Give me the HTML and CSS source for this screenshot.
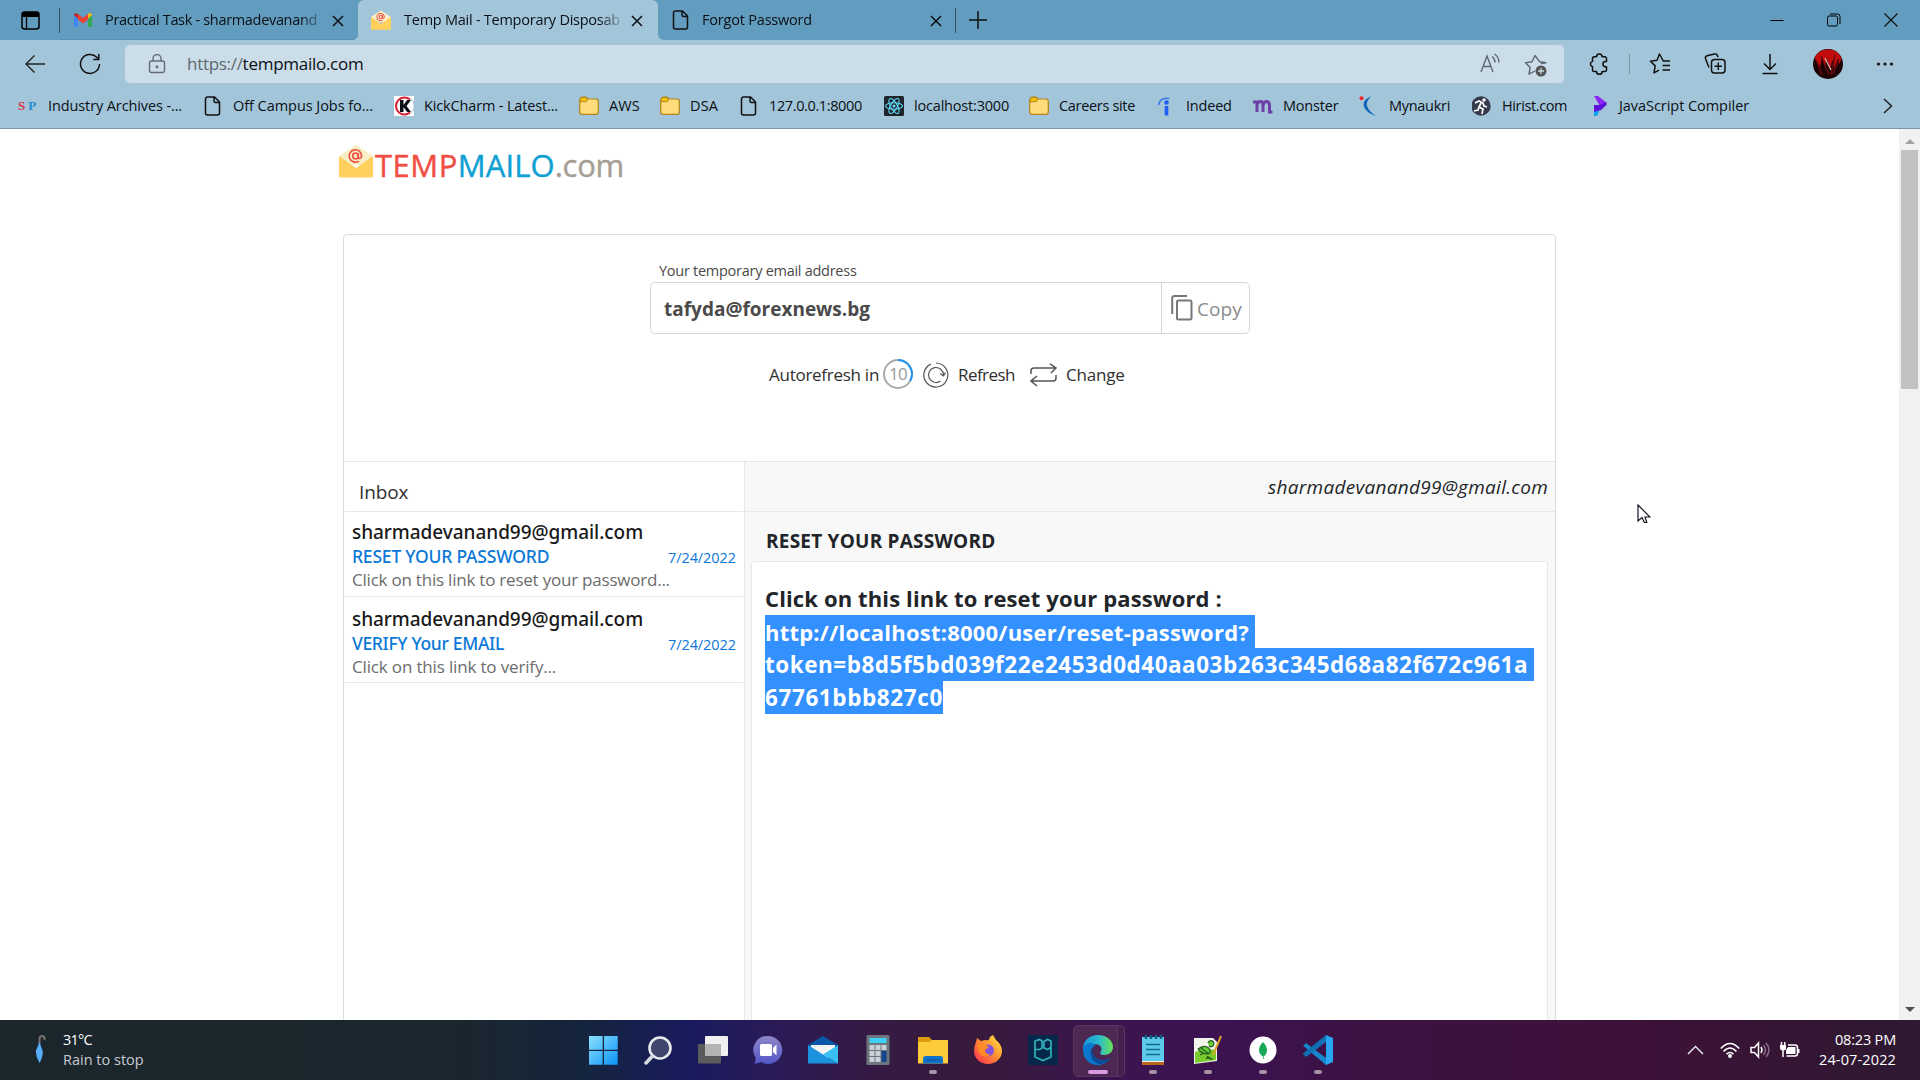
FILE: index.html
```html
<!DOCTYPE html>
<html lang="en">
<head>
<meta charset="utf-8">
<title>Temp Mail - Temporary Disposable Email</title>
<link rel="stylesheet" href="styles.css">
</head>
<body>
<svg class="defs" width="0" height="0">
  <defs>
    <symbol id="i-close" viewBox="0 0 12 12"><path d="M1 1l10 10M11 1L1 11" fill="none" stroke="currentColor" stroke-width="1.5"/></symbol>
    <symbol id="i-page" viewBox="0 0 18 20"><path d="M3.5 1h7l5 5v11a2 2 0 0 1-2 2h-10a2 2 0 0 1-2-2V3a2 2 0 0 1 2-2zM10 1v4a1.500 1.500 0 0 0 1.500 1.500h4" fill="none" stroke="#111" stroke-width="1.500" stroke-linejoin="round"/></symbol>
    <symbol id="i-folder" viewBox="0 0 20 20"><path d="M.7 4.200a3 3 0 0 1 3-3h2.600a2.400 2.400 0 0 1 2.300 1.800h8.400a2.300 2.300 0 0 1 2.300 2.300v10.800a2.300 2.300 0 0 1-2.300 2.300H3a2.300 2.300 0 0 1-2.300-2.300z" fill="#ffdc7c" stroke="#b08416" stroke-width="1.200"/><path d="M1 3.800a2.500 2.500 0 0 1 2.500-2.300h2.800a2 2 0 0 1 0 4.200H1z" fill="#f5c211" stroke="#b08416"/></symbol>
    <symbol id="i-envelope" viewBox="0 0 34 34"><path d="M17 1l17 11v9H0v-9z" fill="#f9efc6"/><path d="M0 12l17 12 17-12v20a1.500 1.500 0 0 1-1.500 1.500h-31A1.500 1.500 0 0 1 0 32z" fill="#ffd05c"/><g fill="none" stroke="#ee5245" stroke-width="1.700"><circle cx="16.500" cy="12" r="2.800"/><path d="M19.300 9v4c0 2.300 3.300 2 3.300-1a6.200 6.200 0 1 0-2.700 5.100"/></g></symbol>
  </defs>
</svg>

<header class="browser">
  <div class="tabstrip">
    <div class="tab-actions"><svg width="19" height="19" viewBox="0 0 19 19"><rect x="1" y="1" width="17" height="17" rx="2.500" fill="none" stroke="#000" stroke-width="1.500"/><path d="M1 6V3a2 2 0 0 1 2-2h13a2 2 0 0 1 2 2v3z"/><path d="M5.500 6v12" stroke="#000" stroke-width="1.300"/></svg></div>
    <div class="tab tab-first">
      <svg class="tab-icon" viewBox="0 0 20 20"><path d="M1 5v12h4V9z" fill="#4285f4"/><path d="M19 5v12h-4V9z" fill="#34a853"/><path d="M1 5l4 3.500V4C3 2.300 1 3.500 1 5z" fill="#c5221f"/><path d="M19 5l-4 3.500V4c2-1.700 4-.5 4 1z" fill="#fbbc04"/><path d="M5 4l5 4 5-4v5.500l-5 4-5-4z" fill="#ea4335"/></svg>
      <span class="tab-title t-practical">Practical Task - sharmadevanand</span>
      <svg class="tab-close"><use href="#i-close"/></svg>
    </div>
    <div class="tab tab-active">
      <svg class="tab-icon"><use href="#i-envelope"/></svg>
      <span class="tab-title t-temp">Temp Mail - Temporary Disposab</span>
      <svg class="tab-close"><use href="#i-close"/></svg>
    </div>
    <div class="tab tab-last">
      <svg class="tab-icon"><use href="#i-page"/></svg>
      <span class="tab-title t-forgot">Forgot Password</span>
      <svg class="tab-close"><use href="#i-close"/></svg>
    </div>
    <svg class="new-tab" viewBox="0 0 18 18"><path d="M9 0v18M0 9h18" stroke="#111" stroke-width="1.500"/></svg>
    <div class="win-controls">
      <svg width="14" height="14"><path d="M.5 7.500h13" stroke="#000"/></svg>
      <svg width="14" height="14" fill="none" stroke="#000"><rect x=".5" y="3" width="10" height="10" rx="1.500"/><path d="M3 1h7.500a2.500 2.500 0 0 1 2.500 2.500V11"/></svg>
      <svg width="14" height="14"><path d="M.5.5l13 13M13.500.5l-13 13" stroke="#111" stroke-width="1.200"/></svg>
    </div>
  </div>

  <div class="toolbar">
    <svg class="back" width="20" height="20" fill="none" stroke="#222" stroke-width="1.400"><path d="M20 10H1M9.500 1.500L1 10l8.500 8.500"/></svg>
    <svg class="reload" width="22" height="22" fill="none" stroke="#111" stroke-width="1.500"><path d="M20.500 11a9.500 9.500 0 1 1-2.700-6.700l1.700 1.900M19.800 1v5.500h-5.500"/></svg>
    <div class="address">
      <svg class="lock" width="18" height="20" fill="none" stroke="#666d72" stroke-width="1.400"><rect x="1.500" y="7" width="15" height="11.500" rx="2"/><path d="M5 7V4.500a4 4 0 0 1 8 0V7"/><circle cx="9" cy="12.700" r=".8" fill="#666d72"/></svg>
      <div class="url"><span class="scheme">https://</span><span class="host">tempmailo.com</span></div>
      <svg class="read" width="22" height="22" fill="none" stroke="#5e676d" stroke-width="1.400"><path d="M2 19L8 3l6 16M4.200 13.500h7.600M13 3.500q3 2 3 6M15.500 1q4.500 3 4.500 8.500"/></svg>
      <svg class="star-add" width="24" height="24"><path d="M17 9.500l5-.8-6.500-1L11 1.500 8 7.700l-6.500 1 4.700 4.700-1.200 6.800 6-3.200" fill="none" stroke="#5e676d" stroke-width="1.400" stroke-linejoin="round"/><circle cx="17" cy="17" r="5.500" fill="#555"/><path d="M17 14v6M14 17h6" stroke="#cadde8" stroke-width="1.300"/></svg>
    </div>
    <div class="tools">
      <svg width="22" height="22" fill="none" stroke="#111" stroke-width="1.500" stroke-linejoin="round"><path d="M6 3.800h2.500a2.800 2.800 0 0 1 5.600 0H17a1.500 1.500 0 0 1 1.500 1.500V8.500h-1a2.600 2.600 0 0 0 0 5.200h1V17a1.500 1.500 0 0 1-1.500 1.500h-2.900a2.800 2.800 0 0 1-5.600 0H6A1.500 1.500 0 0 1 4.500 17v-3.200a2.800 2.800 0 0 1 0-5.400V5.300A1.500 1.500 0 0 1 6 3.800z"/></svg>
      <i class="tool-sep"></i>
      <svg width="22" height="22" fill="none" stroke="#111" stroke-width="1.500" stroke-linejoin="round"><path d="M14 7.500L10.500 1 8 7.200l-6.500 1 4.700 4.700L5 19.800l5-2.600M13.500 8h7.500M13.500 12.500h7.500M13.500 17h7.500"/></svg>
      <svg width="22" height="22" fill="none" stroke="#111" stroke-width="1.500"><rect x="7.500" y="6.500" width="13.500" height="13.500" rx="3"/><path d="M14.300 9.500v7.500M10.500 13.200h7.500M5 14.500L1.500 5.800a2.500 2.500 0 0 1 1.500-3L10.500 1a2.500 2.500 0 0 1 3 1.800l.5 1.500"/></svg>
      <svg width="22" height="22" fill="none" stroke="#111" stroke-width="1.500"><path d="M11 1v15M5 10.500l6 6 6-6M3.500 20.500h15"/></svg>
      <svg class="avatar" width="30" height="30"><circle cx="15" cy="15" r="15" fill="#1c0204"/><path d="M1.500 9A15 15 0 0 1 28.500 9l-2 6-2-5-3 9-2-8-2 8-4-10-1 8-4-9-1 10z" fill="#c20d0c"/><path d="M4 13l5 13M8 7l8 19M22 6l-4 20M26 10l-6 15" stroke="#6d0a10" stroke-width="1.500"/><path d="M12 9l6 12" stroke="#f0bcb6" stroke-width="1.200"/></svg>
      <svg width="18" height="6" fill="#111"><circle cx="2.500" cy="3" r="1.600"/><circle cx="9" cy="3" r="1.600"/><circle cx="15.500" cy="3" r="1.600"/></svg>
    </div>
  </div>

  <nav class="bookmarks">
    <a class="bm"><b class="sp"><i>S</i><i>P</i></b><span class="k1">Industry Archives -...</span></a>
    <a class="bm"><svg><use href="#i-page"/></svg><span>Off Campus Jobs fo...</span></a>
    <a class="bm"><svg viewBox="0 0 20 20"><path d="M0 0h20v20H0z" fill="#fff"/><path d="M16 3.500A8.500 8.500 0 1 0 16 16.500" fill="none" stroke="#d51f36" stroke-width="2"/><path d="M17 3a9 9 0 0 1 0 14" fill="none" stroke="#9bc"/><path d="M6 4h3.500v5L13 4h4l-4.500 6 4.500 6h-4l-3.500-5v5H6z" fill="#0b1118"/></svg><span class="k3">KickCharm - Latest...</span></a>
    <a class="bm"><svg><use href="#i-folder"/></svg><span class="k4">AWS</span></a>
    <a class="bm"><svg><use href="#i-folder"/></svg><span class="k4">DSA</span></a>
    <a class="bm"><svg><use href="#i-page"/></svg><span class="k6">127.0.0.1:8000</span></a>
    <a class="bm"><svg viewBox="0 0 20 20"><rect width="20" height="20" rx="1.500" fill="#20252a"/><g fill="none" stroke="#61dafb" stroke-width="1.100"><ellipse cx="10" cy="10" rx="8.500" ry="3.300"/><ellipse cx="10" cy="10" rx="8.500" ry="3.300" transform="rotate(60 10 10)"/><ellipse cx="10" cy="10" rx="8.500" ry="3.300" transform="rotate(120 10 10)"/></g><circle cx="10" cy="10" r="1.600" fill="#61dafb"/></svg><span class="k7">localhost:3000</span></a>
    <a class="bm"><svg><use href="#i-folder"/></svg><span class="k8">Careers site</span></a>
    <a class="bm"><svg viewBox="0 0 20 20"><path d="M2.500 9Q4 1 13.500 2.500" fill="none" stroke="#3b78e7" stroke-width="1.600"/><circle cx="10.500" cy="6.500" r="2.300" fill="#1f5ff5"/><path d="M8.700 10h3.600v9.500H8.700z" fill="#1f5ff5"/></svg><span class="k9">Indeed</span></a>
    <a class="bm"><svg viewBox="0 0 20 20" fill="none" stroke="#6e3fa5" stroke-width="3"><path d="M0 6h4v10M4 9q1-3.500 3.500-3.500T10 9v7M10 9q1-3.500 3.500-3.500t3 3.500v7h3"/></svg><span class="k9">Monster</span></a>
    <a class="bm"><svg viewBox="0 0 20 20"><circle cx="2.500" cy="2.200" r="2" fill="#ef2630"/><path d="M12 .5C1 4 2 15 17 20 7 13 5 7 12 .5z" fill="#1468b8"/></svg><span class="k10">Mynaukri</span></a>
    <a class="bm"><svg viewBox="0 0 20 20"><circle cx="9" cy="10" r="9.700" fill="#353b4b"/><circle cx="12" cy="4" r="1.700" fill="#fff"/><path d="M3 7l4-2 4 2 1 3 3 1M9 7l-2 4 4 2-1 5M7 11l-1 3-4 1" fill="none" stroke="#fff" stroke-width="1.700"/></svg><span class="k6">Hirist.com</span></a>
    <a class="bm"><svg viewBox="0 0 20 20"><path d="M5 20v-9l5-2v7l-2 4z" fill="#10a5ef"/><path d="M5 0h4l8.500 6.500-6 5-2-4z" fill="#8a27f5"/><path d="M5 9l5 0 7.500-3v3L12 14l-7 2z" fill="#5c12d8"/></svg><span>JavaScript Compiler</span></a>
    <svg class="more" width="10" height="16"><path d="M1 1l7.500 7L1 15" fill="none" stroke="#222" stroke-width="1.500"/></svg>
  </nav>
</header>

<div class="viewport">
  <main class="page">
    <div class="logo"><svg width="34" height="34"><use href="#i-envelope"/></svg><span class="l-temp">TEMP</span><span class="l-mailo">MAILO</span><span class="l-com">.com</span></div>
    <section class="card">
      <div class="address-panel">
        <label class="mail-label">Your temporary email address</label>
        <div class="mail-box">
          <span class="mail-value">tafyda@forexnews.bg</span>
          <button class="copy"><svg width="22" height="26" fill="none" stroke="#777" stroke-width="2"><rect x="6" y="5.500" width="14.500" height="19" rx="1.500"/><path d="M1.200 19V3a2 2 0 0 1 2-2H16"/></svg><span>Copy</span></button>
        </div>
        <div class="actions">
          <span class="auto">Autorefresh in</span>
          <span class="timer"><svg width="30" height="30" fill="none" stroke-width="2"><circle cx="15" cy="15" r="14" stroke="#aaa"/><path d="M15 1A14 14 0 0 1 27 22" stroke="#2094f3"/></svg><b>10</b></span>
          <svg class="refresh-icon" width="26" height="26" fill="none" stroke="#555" stroke-width="1.200"><path d="M13 1a12 12 0 1 1-5 1M5.500 3.500a12 12 0 0 0-3 4"/><path d="M20.500 13a7.500 7.500 0 1 0-3 6M17 11.500l3.500 2.500 2-3.500"/></svg>
          <span class="refresh">Refresh</span>
          <svg class="change-icon" width="27" height="24" fill="none" stroke="#555" stroke-width="1.500"><path d="M1 11V8a3 3 0 0 1 3-3h22M20 .8L26 5l-5 5M26 12v3a3 3 0 0 1-3 3H1M7 13l-6 5 6 5"/></svg>
          <span class="change">Change</span>
        </div>
      </div>
      <div class="mail-area">
        <aside class="inbox">
          <h2 class="inbox-title">Inbox</h2>
          <article class="mail">
            <div class="from">sharmadevanand99@gmail.com</div>
            <div class="subject-row"><span class="subject">RESET YOUR PASSWORD</span><time>7/24/2022</time></div>
            <div class="preview">Click on this link to reset your password...</div>
          </article>
          <article class="mail mail-second">
            <div class="from">sharmadevanand99@gmail.com</div>
            <div class="subject-row"><span class="subject s-verify">VERIFY Your EMAIL</span><time>7/24/2022</time></div>
            <div class="preview p-verify">Click on this link to verify...</div>
          </article>
        </aside>
        <section class="reader">
          <div class="sender">sharmadevanand99@gmail.com</div>
          <h3 class="reader-title">RESET YOUR PASSWORD</h3>
          <div class="message">
            <p class="intro">Click on this link to reset your password :</p>
            <p class="sel sel-a">http://localhost:8000/user/reset-password?</p>
            <p class="sel sel-b">token=b8d5f5bd039f22e2453d0d40aa03b263c345d68a82f672c961a</p>
            <p class="sel sel-c">67761bbb827c0</p>
          </div>
        </section>
      </div>
    </section>
  </main>
  <div class="scrollbar">
    <svg width="10" height="5"><path d="M0 5l5-5 5 5z" fill="#a3a3a3"/></svg>
    <i class="thumb"></i>
    <svg width="10" height="5"><path d="M0 0l5 5 5-5z" fill="#505050"/></svg>
  </div>
</div>

<footer class="taskbar">
  <div class="weather">
    <svg width="12" height="30"><path d="M5.500 9V4q0-3 2.500-3t2.500 3v1" fill="none" stroke="#77706c" stroke-width="2"/><path d="M5.500 7L1.800 16q0 6 3.700 12 3.700-6 3.200-12z" fill="#57aef8"/></svg>
    <div><div class="temp">31°C</div><div class="cond">Rain to stop</div></div>
  </div>
  <div class="apps">
    <div class="app"><svg viewBox="0 0 30 30"><defs><linearGradient id="win" x2="1" y2="1"><stop stop-color="#8be2ff"/><stop offset="1" stop-color="#0b93f5"/></linearGradient></defs><path d="M1 1h13.700v13.700H1zM16 1h13.700v13.700H16zM1 16h13.700v13.700H1zM16 16h13.700v13.700H16z" fill="url(#win)"/></svg></div>
    <div class="app"><svg viewBox="0 0 30 30"><circle cx="17" cy="13" r="10.500" fill="#3f4770" stroke="#e8eaee" stroke-width="2.600"/><path d="M9.500 21L3 28" stroke="#d6dbe0" stroke-width="3.500" stroke-linecap="round"/></svg></div>
    <div class="app"><svg viewBox="0 0 30 30"><rect y="9" width="23" height="19.500" rx="1" fill="#5b5b5d"/><rect x="7" y="1" width="23" height="20" rx="1" fill="#f0f0f1"/><path d="M7 9h16v12H7z" fill="#b3b3b5"/></svg></div>
    <div class="app"><svg viewBox="0 0 30 30"><defs><linearGradient id="chat" x2="0" y2="1"><stop stop-color="#8f86c9"/><stop offset="1" stop-color="#5356c8"/></linearGradient></defs><path d="M15 1a14 14 0 1 1-7 26q-3 2-7 1.500 2-2 1.500-6A14 14 0 0 1 15 1z" fill="url(#chat)"/><rect x="7" y="9" width="12" height="12" rx="1.500" fill="#fff"/><path d="M20 13l3.500-3.500v11L20 17z" fill="#fff"/></svg></div>
    <div class="app"><svg viewBox="0 0 30 30"><path d="M0 10l15-9 15 9v9H0z" fill="#0a57a8"/><path d="M3 10h24v9l-12 6L3 19z" fill="#f3f3f3"/><path d="M0 10l15 9.500L30 28.500H0z" fill="#1c92df"/><path d="M30 10L15 19.500l15 9z" fill="#38c0f2"/></svg></div>
    <div class="app"><svg viewBox="0 0 30 30"><rect x="3.500" width="23" height="30" rx="1.500" fill="#6d767f"/><path d="M6.500 3h17v5h-17z" fill="#3fd0f8"/><path d="M6.500 10h5v5h-5zM12.500 10h5v5h-5zM18.500 10h5v5h-5zM6.500 16h5v5h-5zM12.500 16h5v5h-5zM6.500 22h5v5h-5zM12.500 22h5v5h-5z" fill="#c9d2d9"/><path d="M18.500 16h5v11h-5z" fill="#12478e"/></svg></div>
    <div class="app run"><svg viewBox="0 0 30 30"><path d="M0 2h11l3 3v5H0z" fill="#dc9b0b"/><path d="M0 7h11l3-2h16v23.500H0z" fill="#fecb3c"/><path d="M5 28.500V24a3 3 0 0 1 3-3h14a3 3 0 0 1 3 3v4.500z" fill="#0f72c9"/><path d="M8.500 25h13" stroke="#0a4f95"/></svg></div>
    <div class="app"><svg viewBox="0 0 30 30"><defs><linearGradient id="fox" x1="1" x2="0" y2="1"><stop stop-color="#fff14a"/><stop offset=".45" stop-color="#ff9230"/><stop offset="1" stop-color="#ff2758"/></linearGradient></defs><path d="M3 7l1-4 4 3 4-1q5 1 4-1 1-3 4-4l3 5q6 5 6 11a14 13 0 0 1-28 0q0-5 2-9z" fill="url(#fox)"/><circle cx="15" cy="15.500" r="6" fill="#8054dd"/><path d="M5 9l8 1 3 2-4 3q0 5 6 4-4 5-10 1-4-4-3-11z" fill="#ff8b27"/></svg></div>
    <div class="app"><svg viewBox="0 0 30 30"><path d="M0 0h30v30H0z" fill="#07264b"/><path d="M7 21V6l4.500-1.500L14 6v7l-2.500 1.500H7M23 12.500l-3.500 2L16 13V6.500l3.500-2L23 6v16l-8 3.500L7 22v-4" fill="none" stroke="#31b1b8" stroke-width="1.700"/></svg></div>
    <div class="app run active"><svg viewBox="0 0 30 30"><defs><linearGradient id="edge" x2="1"><stop stop-color="#1596df"/><stop offset=".55" stop-color="#2dbcce"/><stop offset="1" stop-color="#6be451"/></linearGradient></defs><path d="M0 14C0 5 7 0 15 0c9 0 15 6 15 12 0 5-4 8-9 8-3 0-5-1-3-4 2-4-2-7-6-7-6 0-11 3-12 9z" fill="url(#edge)"/><path d="M0 15c1-7 8-9 13-5-6 3-7 9-3 14 4 4 10 4 17-1-3 5-8 7-12 7C7 30 0 24 0 15z" fill="#0879cf"/><path d="M11 13c-3 7 2 12 9 12q4 0 7-2-3 5-9 6C9 29 5 20 11 13z" fill="#0a4d99"/></svg></div>
    <div class="app run"><svg viewBox="0 0 30 30"><path d="M4 25h22v5H4z" fill="#b96620"/><path d="M4 25h22v2H4z" fill="#f3eee8"/><path d="M4 2h22v24H4z" fill="#5dcaeb"/><path d="M8 9.500h14M8 14.500h14M8 19.500h14" stroke="#116c8c" stroke-width="1.700"/><path d="M8 0v4M13 0v4M18 0v4M23 0v4" stroke="#0c6080" stroke-width="2.500"/></svg></div>
    <div class="app run"><svg viewBox="0 0 30 30"><path d="M1 3h19l4 4v19L1 29z" fill="#f1f4e9"/><path d="M2 17q10-4 21-2v10L2 28z" fill="#78cd2c"/><path d="M5 14q5-4 9-2t3 6q-6 3-12-4M8 13l8 6M11 18l-4 2M15 8a3 3 0 1 1 1 3" fill="#65ce37" stroke="#255b20" stroke-width="1.200"/><path d="M28 1l-7 17-1 2" stroke="#dda127" stroke-width="2"/><path d="M13 24l2-3v3l2-2v2h3" fill="none" stroke="#164515"/></svg></div>
    <div class="app run"><svg viewBox="0 0 30 30"><circle cx="15" cy="15" r="13.500" fill="#fff"/><path d="M15 7q-4 4-4 8t4 6.500V24h.7v-2.500Q19 19 19 15t-4-8z" fill="#18a957"/></svg></div>
    <div class="app run"><svg viewBox="0 0 30 30"><path d="M0 11l3-3 20 15v7L1 11.500z" fill="#1687cf"/><path d="M0 19l3 3L23 7V0L0 18.500z" fill="#0f70b3"/><path d="M23 0l7 3v24l-7 3z" fill="#2aa5f2"/></svg></div>
  </div>
  <div class="tray">
    <svg width="17" height="10"><path d="M1 9l7.500-7.500L16 9" fill="none" stroke="#eee" stroke-width="1.400"/></svg>
    <svg width="20" height="16" fill="none" stroke="#fff" stroke-width="1.600"><path d="M.8 6.500q9.200-10 18.400 0M3.600 9.500q6.400-7 12.800 0M6.500 12.200q3.500-3.500 7 0"/><circle cx="10" cy="14" r="1.200" fill="#fff"/></svg>
    <svg width="20" height="18" fill="none" stroke="#fff" stroke-width="1.500"><path d="M1 6.500h3.500L8.500 2v14l-4-4.500H1z"/><path d="M11 6q2 3 0 6"/><path d="M13.500 4q4 5 0 10M16 2q6 7 0 14" stroke="#8a6d88"/></svg>
    <svg width="20" height="18" fill="none" stroke="#fff" stroke-width="1.500"><path d="M8 4h7a2.500 2.500 0 0 1 2.500 2.500v6A2.500 2.500 0 0 1 15 15H6.500"/><path d="M8 6h7.500v7H6V9zM17.500 8h2v4h-2zM0 4h6v3q0 2.500-3 2.500T0 7z" fill="#fff" stroke="none"/><path d="M1.500 1v3M4.700 1v3M3 9v7"/></svg>
    <div class="clock"><div class="time">08:23 PM</div><div class="date">24-07-2022</div></div>
  </div>
</footer>
<svg class="cursor" width="14" height="21" viewBox="0 0 14 21"><path d="M1 1v16l4-3.500 2.300 5h2.500L8 13h5z" fill="#fff" stroke="#111120" stroke-width="1.200"/></svg>
</body>
</html>
```
FILE: styles.css
```css
* { box-sizing: border-box; }
body {
  margin: 0;
  width: 1920px;
  height: 1080px;
  overflow: hidden;
  display: flex;
  flex-direction: column;
  font-family: "Open Sans", "Noto Sans", sans-serif;
  color: #212529;
  background: #fff;
}
h2, h3, p { margin: 0; }
svg { display: block; flex: none; }
.defs { display: none; }

/* Browser chrome */
.browser { height: 129px; background: #a3c5d9; border-bottom: 1px solid #7897a7; color: #0b1014; flex: none; }
.tabstrip { height: 40px; display: flex; align-items: center; background: #a3c5d9; }
.tab-actions { width: 60px; height: 40px; padding: 11px 0 0 21px; background: linear-gradient(#364f5e, #364f5e) 59px 8px / 1px 25px no-repeat #629cbf; }
.tab { height: 40px; display: flex; align-items: center; background: #629cbf; }
.tab-first { width: 298px; padding-left: 13px; border-radius: 0 0 6px 0; box-shadow: inset 0 -1px #5890b2; }
.tab-active { width: 300px; padding-left: 13px; background: #a3c5d9; border-radius: 6px 6px 0 0; box-shadow: 0 -6px 0 #629cbf; }
.tab-last { width: 298px; padding-left: 13px; border-radius: 0 0 0 6px; background: linear-gradient(#364f5e, #364f5e) 297px 8px / 1px 25px no-repeat #629cbf; }
.tab-icon { width: 20px; height: 20px; }
.tab-title { width: 217px; margin-left: 12px; font-size: 14.5px; line-height: 38px; white-space: nowrap; -webkit-mask-image: linear-gradient(90deg, #000 195px, transparent 222px); }
.t-practical { letter-spacing: -.32px; }
.t-temp { margin-left: 13px; letter-spacing: -.25px; }
.t-forgot { margin-left: 11px; letter-spacing: -.2px; }
.tab-close { width: 12px; height: 12px; margin-left: 10px; margin-top: 1px; }
.tab-last .tab-close { margin-left: 11px; }
.new-tab { width: 44px; height: 40px; padding: 11px 13px; background: #629cbf; }
.win-controls { flex: 1; height: 40px; display: flex; justify-content: flex-end; align-items: center; gap: 43px; padding-right: 22px; background: #629cbf; }

.toolbar { height: 48px; display: flex; align-items: center; }
.back { margin-left: 25px; }
.reload { margin-left: 34px; }
.address { width: 1439px; height: 38px; margin-left: 24px; display: flex; align-items: center; background: #cadde8; border-radius: 5px; box-shadow: 0 0 1px #b8d2df; }
.lock { margin-left: 23px; }
.url { flex: 1; margin-left: 21px; font-size: 17px; line-height: 38px; }
.scheme { color: #5d686f; letter-spacing: -.3px; }
.host { letter-spacing: -.27px; }
.star-add { margin: 3px 16px 0 23px; }
.tools { flex: 1; display: flex; align-items: center; padding-left: 24px; }
.tool-sep { width: 1px; height: 20px; background: #7795a5; margin: 0 19px; }
.tools svg + svg { margin-left: 33px; }
.tools svg + .avatar { margin-left: 32px; }
.tools .avatar + svg { margin-left: 33px; }

.bookmarks { height: 35px; padding-left: 18px; display: grid; grid-template-columns: 185px 191px 185px 81px 79px 145px 145px 127px 97px 106px 113px 117px 294px 10px; align-items: center; font-size: 14.5px; line-height: 34px; letter-spacing: -.05px; white-space: nowrap; }
.bm { display: flex; align-items: center; }
.bm svg { width: 20px; height: 20px; margin-right: 10px; }
.sp { width: 20px; margin-right: 10px; display: flex; gap: 3px; font: bold 13px "Liberation Serif", serif; letter-spacing: 0; }
.sp i { font-style: normal; color: #dd3047; }
.sp i + i { color: #258bcd; }
.k1 { letter-spacing: -.11px; } .k3 { letter-spacing: -.15px; } .k4 { letter-spacing: .14px; }
.k6 { letter-spacing: -.38px; } .k7 { letter-spacing: -.19px; } .k8 { letter-spacing: -.32px; }
.k9 { letter-spacing: -.2px; } .k10 { letter-spacing: -.29px; }

/* Web page */
.viewport { height: 891px; flex: none; display: flex; }
.page { flex: 1; padding: 15px 0 0 339px; overflow: hidden; }
.logo { height: 34px; display: flex; align-items: center; font-size: 31px; line-height: 42px; }
.logo span { padding-top: 7px; -webkit-text-stroke: .4px currentColor; }
.l-temp { color: #f04e43; letter-spacing: .5px; margin-left: 2px; }
.l-mailo { color: #0fa0d3; letter-spacing: .1px; }
.l-com { color: #a69e94; letter-spacing: -.3px; }
.card { width: 1213px; height: 900px; margin: 56px 0 0 4px; border: 1px solid #dcdcdc; border-radius: 4px 4px 0 0; }
.address-panel { height: 226px; padding: 25px 305px 0 306px; color: #4a4a4a; }
.mail-label { display: block; height: 22px; padding-left: 9px; font-size: 14.5px; line-height: 21px; letter-spacing: -.27px; }
.mail-box { width: 600px; height: 52px; display: flex; border: 1px solid #d6d6d6; border-radius: 5px; }
.mail-value { flex: 1; padding-left: 13px; font-size: 19px; line-height: 52px; font-weight: 700; letter-spacing: 0; }
.copy { width: 88px; padding: 0 0 0 9px; display: flex; align-items: center; gap: 4px; border: 0; border-left: 1px solid #d6d6d6; background: none; color: #8b8b8b; font: 19px/50px "Open Sans", sans-serif; letter-spacing: .1px; }
.copy span { padding-top: 2px; }
.copy svg { margin-top: -1px; }
.actions { display: flex; align-items: center; height: 30px; margin: 25px 0 0 119px; font-size: 17px; line-height: 30px; color: #303030; white-space: nowrap; }
.auto { width: 110px; padding-top: 1px; letter-spacing: -.27px; }
.timer { width: 30px; height: 30px; margin-left: 4px; display: grid; }
.timer svg, .timer b { grid-area: 1 / 1; }
.timer b { text-align: center; font-weight: 400; line-height: 29px; color: #999; letter-spacing: -.6px; }
.refresh-icon { margin-left: 10px; margin-top: 1px; }
.refresh { width: 57px; margin-left: 9px; padding-top: 1px; letter-spacing: -.55px; }
.change-icon { margin-left: 15px; margin-top: 1px; }
.change { margin-left: 9px; padding-top: 1px; letter-spacing: -.2px; }

.mail-area { height: 700px; display: flex; border-top: 1px solid #e6e6e6; }
.inbox { width: 401px; padding: 0 1px 0 1px; border-right: 1px solid #e6e6e6; }
.inbox-title { height: 50px; padding: 13px 0 0 14px; font-size: 19px; line-height: 34px; font-weight: 400; letter-spacing: -.1px; border-bottom: 1px solid #e8e8e8; color: #303030; }
.mail { height: 85px; padding: 7px 7px 0; border-bottom: 1px solid #e8e8e8; white-space: nowrap; }
.mail-second { height: 86px; padding-top: 9px; }
.from { font: 500 19px/27px "Noto Sans", sans-serif; letter-spacing: -.05px; color: #191919; }
.subject-row { display: flex; justify-content: space-between; align-items: baseline; height: 22px; line-height: 20px; color: #0b78d8; }
.subject { font: 500 17.5px/20px "Noto Sans", sans-serif; letter-spacing: -.2px; }
.s-verify { letter-spacing: -.33px; }
.subject-row time { font-size: 14.5px; letter-spacing: -.07px; }
.preview { font-size: 17px; line-height: 24px; letter-spacing: -.22px; color: #6c6c6c; }
.p-verify { letter-spacing: -.16px; }
.reader { flex: 1; background: #f8f8f8; }
.sender { height: 50px; padding-right: 7px; text-align: right; font-size: 19px; line-height: 50px; font-style: italic; letter-spacing: .28px; border-bottom: 1px solid #e8e8e8; }
.reader-title { height: 49px; padding-left: 21px; font-size: 19px; line-height: 58px; font-weight: 700; letter-spacing: .23px; }
.message { height: 600px; margin: 0 7px 0 6px; padding: 20px 0 0 13px; background: #fff; border: 1px solid #e8e8e8; border-radius: 3px; font-size: 22px; font-weight: 700; }
.intro { height: 33px; padding-top: 1px; line-height: 31px; letter-spacing: .13px; }
.sel { height: 33px; padding-top: 1px; line-height: 32px; color: #fff; background: #3390ff; white-space: nowrap; }
.sel-a { width: 490px; letter-spacing: .22px; }
.sel-b { width: 769px; font-size: 22.5px; letter-spacing: .51px; }
.sel-c { width: 178px; font-size: 22.5px; letter-spacing: .6px; }
.scrollbar { width: 21px; background: #f1f1f1; display: flex; flex-direction: column; align-items: center; padding: 10px 0 8px; }
.thumb { width: 17px; height: 239px; margin: 6px 0 auto; background: #c1c1c1; }

/* Taskbar */
.taskbar { height: 60px; flex: none; display: flex; align-items: center; color: #fff; font-size: 14.5px; line-height: 20px; background: linear-gradient(90deg, #1b252c 0, #1a262d 460px, #15243f 590px, #191b5e 690px, #2b1a55 780px, #351a42 880px, #371a3b 980px, #3b1450 1120px, #3b1350 1230px, #3c1140 1400px, #3d1138 1640px, #2d1930 1920px); }
.weather { width: 588px; display: flex; align-items: center; padding-left: 34px; }
.weather svg { margin-right: 17px; }
.temp { letter-spacing: -.73px; }
.cond { color: #c8cccf; }
.apps { display: flex; height: 50px; margin-left: -13px; }
.app { width: 55px; height: 50px; padding: 10px 12.500px 0; position: relative; }
.app svg { width: 30px; height: 30px; position: relative; }
.run::after { content: ""; position: absolute; left: 24px; top: 45px; width: 8px; height: 4px; border-radius: 2px; background: #a192a6; }
.active::before { content: ""; position: absolute; left: 3px; top: 0; width: 50px; height: 50px; border-radius: 5px; background: linear-gradient(90deg, transparent 43px, #5a3562 43px, #5a3562 44px, #44204d 44px) #4c2852; border: 1px solid #583560; }
.active.run::after { left: 18px; width: 20px; background: #d99ce2; }
.tray { margin-left: auto; display: flex; align-items: center; padding-right: 24px; }
.tray svg + svg { margin-left: 10px; }
.tray svg:nth-child(2) { margin-left: 16px; }
.clock { width: 80px; margin-left: 16px; text-align: right; }
.time { letter-spacing: -.19px; }
.date { letter-spacing: .13px; }
.cursor { position: absolute; left: 1637px; top: 504px; }
```
